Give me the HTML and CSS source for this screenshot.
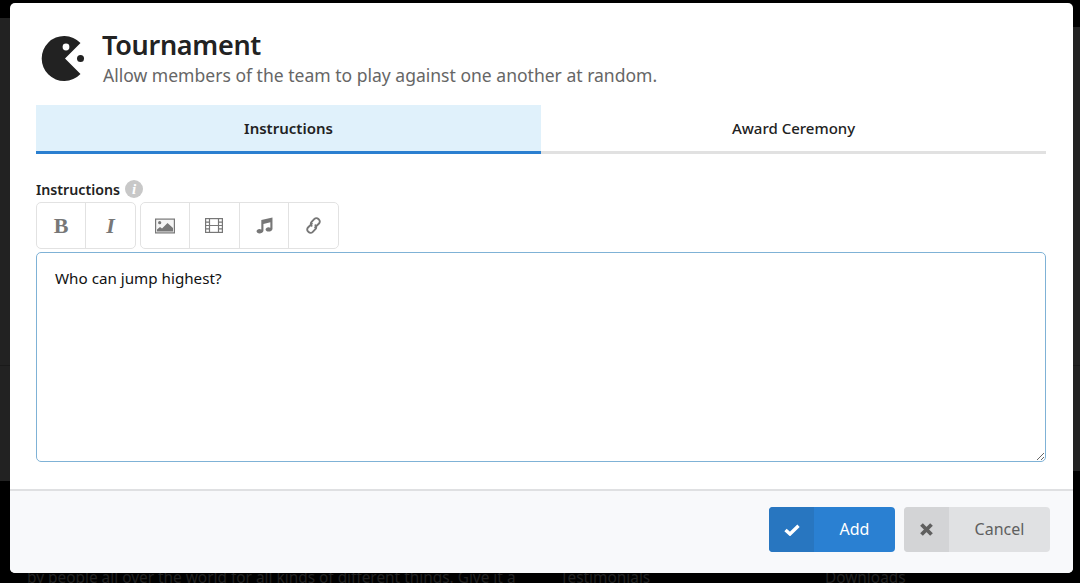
FILE: index.html
```html
<!DOCTYPE html>
<html lang="en">
<head>
<meta charset="utf-8">
<title>Tournament</title>
<link rel="stylesheet" href="styles.css">
</head>
<body>
<div class="backdrop">
  <div class="bd-left"></div>
  <div class="bd-right"></div>
  <div class="bd-line"></div>
  <span class="bd-text bd-t1">by people all over the world for all kinds of different things. Give it a</span>
  <span class="bd-text bd-t2">Testimonials</span>
  <span class="bd-text bd-t3">Downloads</span>
</div>
<main class="modal">
  <div class="modal-main">
    <header class="head">
      <svg class="pac" viewBox="0 0 44 46" width="44" height="46" aria-hidden="true">
        <path fill="#222" d="M39.500 7A22.500 22.500 0 1 0 39.500 38L24 22.500z"/>
        <circle cx="25" cy="11" r="3.400" fill="#fff"/>
        <circle cx="39.500" cy="22.500" r="3.500" fill="#222"/>
      </svg>
      <div class="head-text">
        <h1 class="title">Tournament</h1>
        <p class="sub">Allow members of the team to play against one another at random.</p>
      </div>
    </header>
    <nav class="tabs">
      <div class="tab active">Instructions</div>
      <div class="tab">Award Ceremony</div>
    </nav>
    <div class="label-row">
      <span class="label">Instructions</span>
      <span class="info">i</span>
    </div>
    <div class="toolbar">
      <div class="group group-text">
        <div class="tool glyph bold">B</div>
        <div class="tool glyph ital">I</div>
      </div>
      <div class="group group-media">
        <div class="tool">
          <svg viewBox="0 0 20 16" width="20" height="16" aria-hidden="true">
            <rect x="0.600" y="1.100" width="18.800" height="13.800" fill="#f4f4f4" stroke="#777" stroke-width="1.200"/>
            <circle cx="4.700" cy="4.700" r="1.600" fill="#777"/>
            <path fill="#777" d="M2 13.500v-2l3-2.500 2 1.500 5.500-5.500 5.500 5v3.500z"/>
          </svg>
        </div>
        <div class="tool">
          <svg viewBox="0 0 18 15" width="18" height="15" aria-hidden="true">
            <rect x="0.600" y="0.600" width="16.800" height="13.800" fill="none" stroke="#777" stroke-width="1.200"/>
            <path fill="none" stroke="#777" stroke-width="1.200" d="M4.500 0.600v13.800M13.500 0.600v13.800M0.600 4.200h3.900M0.600 7.500h16.800M0.600 10.800h3.900M13.500 4.200h3.900M13.500 10.800h3.900"/>
          </svg>
        </div>
        <div class="tool">
          <svg viewBox="0 0 16 16" width="17" height="17" aria-hidden="true">
            <path fill="#777" d="M15.500 0.500 5 2.800v9a3 2.200 0 0 0-1.700-.4C1.800 11.400.500 12.400.500 13.500S1.800 15.500 3.300 15.500 7 14.500 7 13V6.500L13.500 5v5a3 2.200 0 0 0-1.700-.4c-1.500 0-2.800 1-2.800 2.100s1.300 2 2.800 2 3.700-1 3.700-2.500z"/>
          </svg>
        </div>
        <div class="tool">
          <svg viewBox="0 0 18 18" width="19" height="19" aria-hidden="true">
            <path fill="none" stroke="#777" stroke-width="1.800" stroke-linecap="round" d="M7.500 7.200l-3.700 3.700a2.600 2.600 0 0 0 0 3.700l.6.6a2.600 2.600 0 0 0 3.700 0l2.700-2.700a2.600 2.600 0 0 0 0-3.700M10.500 10.800l3.700-3.700a2.600 2.600 0 0 0 0-3.700l-.6-.6a2.600 2.600 0 0 0-3.700 0L7.200 5.500a2.600 2.600 0 0 0 0 3.700"/>
          </svg>
        </div>
      </div>
    </div>
    <textarea class="editor" aria-label="Instructions">Who can jump highest?</textarea>
  </div>
  <footer class="foot">
    <button class="btn btn-add" type="button">
      <span class="btn-icon">
        <svg viewBox="0 0 16 12" width="16" height="12" aria-hidden="true"><path fill="none" stroke="#fff" stroke-width="3.400" d="M1.500 6l4.500 4L14.500 1.800"/></svg>
      </span>
      <span class="btn-label">Add</span>
    </button>
    <button class="btn btn-cancel" type="button">
      <span class="btn-icon">
        <svg viewBox="0 0 13 13" width="13" height="13" aria-hidden="true"><path fill="none" stroke="#5f5f5f" stroke-width="3.800" d="M1.500 1.500l10 10M11.500 1.500l-10 10"/></svg>
      </span>
      <span class="btn-label">Cancel</span>
    </button>
  </footer>
</main>
</body>
</html>
```
FILE: styles.css
```css
* { box-sizing: border-box; }
html, body { height: 100%; }
body {
  margin: 0;
  background: #000;
  padding: 3px 7px 10px 10px;
  overflow: hidden;
  font-family: "Noto Sans", "Open Sans", sans-serif;
  position: relative;
}
.backdrop { position: absolute; inset: 0; overflow: hidden; }
.bd-left { position: absolute; left: 0; width: 40px; top: 18px; height: 463px; background: #222; }
.bd-right { position: absolute; right: 0; width: 40px; top: 27px; height: 444px; background: #222; }
.bd-line { position: absolute; left: 0; right: 0; top: 365px; height: 1px; background: #1a1a1a; }
.bd-text { position: absolute; top: 568px; font-size: 15.400px; line-height: 20px; color: #222; white-space: nowrap; }
.bd-t1 { left: 27px; }
.bd-t2 { left: 560px; }
.bd-t3 { left: 825px; }

.modal {
  position: relative;
  height: 570px;
  background: #fff;
  border-radius: 5px;
  display: flex;
  flex-direction: column;
  overflow: hidden;
}
.modal-main { flex: 1; padding: 0 27px 0 26px; display: flex; flex-direction: column; }
.head { height: 102px; display: flex; align-items: flex-start; padding: 33px 0 0 5px; }
.pac { flex: none; margin-right: 18px; }
.head-text { margin-top: -9px; }
.title { margin: 0 0 0 -1px; font-size: 27px; line-height: 36px; font-weight: 600; color: #222; letter-spacing: -0.3px; }
.sub { margin: 0; font-size: 17.550px; line-height: 24px; color: #666; }

.tabs { display: flex; height: 49px; }
.tab {
  flex: 1;
  display: flex; align-items: center; justify-content: center;
  font-size: 15px; font-weight: 500; color: #222;
  border-bottom: 3px solid #e1e1e1;
}
.tab.active { background: #e0f1fb; border-bottom-color: #2a7fd0; font-weight: 600; }

.label-row { display: flex; align-items: center; gap: 5px; height: 24px; margin-top: 23px; margin-bottom: 1px; }
.label { font-size: 14.200px; font-weight: 600; color: #222; }
.info {
  width: 18px; height: 18px; border-radius: 50%; background: #c8c8c8; color: #fff;
  font-family: "Liberation Serif", serif; font-style: italic; font-weight: 700; font-size: 15px;
  display: flex; align-items: center; justify-content: center;
}

.toolbar { display: flex; gap: 4px; margin-bottom: 3px; }
.group { display: flex; height: 47px; border: 1px solid #e2e2e2; border-radius: 5px; }
.group-text { width: 100px; }
.group-media { width: 199px; }
.tool {
  flex: 1; display: flex; align-items: center; justify-content: center;
  border-left: 1px solid #e2e2e2; color: #777;
}
.tool:first-child { flex: none; width: 48px; border-left: 0; }
.glyph { font-family: "Liberation Serif", serif; font-size: 22px; }
.bold { font-weight: 700; }
.ital { font-style: italic; font-weight: 700; }

.editor {
  display: block;
  width: 100%;
  height: 210px;
  padding: 13.500px 18px;
  border: 1px solid #7fb2d6;
  border-radius: 5px;
  outline: 0;
  font-family: inherit;
  font-size: 15.200px;
  line-height: 22px;
  color: #111;
  background: #fff;
}

.foot {
  height: 84px;
  background: #f8f9fb;
  border-top: 2px solid #dfe0e2;
  display: flex; justify-content: flex-end; align-items: flex-start;
  gap: 9px;
  padding: 16px 23px 0 0;
}
.btn {
  display: flex; height: 45px; padding: 0; border: 0; border-radius: 4px; overflow: hidden;
  font-family: inherit; font-size: 16px;
}
.btn-icon { width: 45px; height: 100%; flex: none; display: flex; align-items: center; justify-content: center; }
.btn-label { flex: 1; height: 100%; display: flex; align-items: center; justify-content: center; padding-bottom: 2px; }
.btn-add { width: 126px; background: #2a80d2; color: #fff; }
.btn-add .btn-icon { background: #2876c0; }
.btn-cancel { width: 146px; background: #e0e1e3; color: #5f5f5f; }
.btn-cancel .btn-icon { background: #d3d4d6; }
```
